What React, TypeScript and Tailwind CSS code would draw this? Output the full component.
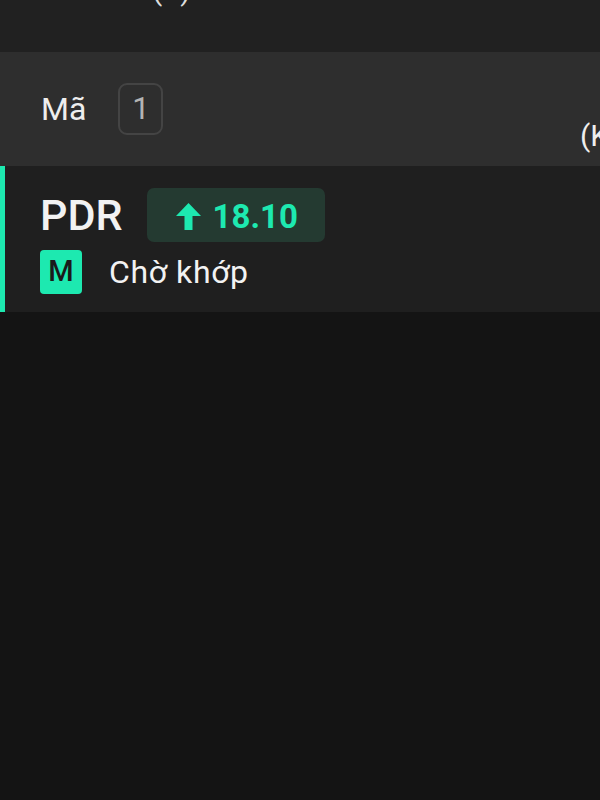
export default function App() {
  return (
    <div className="w-[600px] h-[800px] bg-[#141414] font-['Roboto','Liberation_Sans',sans-serif] overflow-hidden">
      {/* top strip, previous section cut off */}
      <div className="h-[52px] bg-[#212121] overflow-hidden">
        <div className="-mt-[27px] ml-[152px] text-[30px] leading-[34px] text-[#dddddd]">(đ)</div>
      </div>

      {/* table header */}
      <div className="h-[114px] bg-[#2e2e2e] flex items-center pl-[41px] relative overflow-hidden">
        <span className="text-[32px] text-[#eeeeee]">Mã</span>
        <span className="ml-[32px] w-[45px] h-[52px] rounded-[9px] border-2 border-[#444444] flex items-center justify-center text-[31px] text-[#b4b4b4]">
          1
        </span>
        <span className="absolute left-[580px] top-[61px] text-[30px] text-[#eeeeee] whitespace-nowrap">(KL)</span>
      </div>

      {/* order row */}
      <div className="h-[146px] bg-[#1f1f1f] border-l-[5px] border-[#1de9b0] pl-[35px] pt-[22px]">
        <div className="flex items-center h-[54px]">
          <span className="text-[43px] font-medium text-[#f2f2f2] leading-none">PDR</span>
          <span className="ml-[24px] w-[178px] h-[54px] rounded-[7px] bg-[#243a31] flex items-center pl-[29px] pt-[3px]">
            <svg width="25" height="27" viewBox="0 0 25 27" className="text-[#1de9b0]">
              <polygon points="12.5,0 25,13 16.5,13 16.5,27 8.5,27 8.5,13 0,13" fill="currentColor" />
            </svg>
            <span className="ml-[12px] text-[33px] font-bold text-[#1de9b0] leading-none">18.10</span>
          </span>
        </div>
        <div className="flex items-center mt-[6px]">
          <span className="w-[42px] h-[44px] rounded-[4px] bg-[#1de9b0] flex items-center justify-center text-[29px] font-medium text-[#1a1a1a]">
            M
          </span>
          <span className="ml-[27px] text-[32px] tracking-[0.6px] text-[#f2f2f2]">Chờ khớp</span>
        </div>
      </div>
    </div>
  );
}
